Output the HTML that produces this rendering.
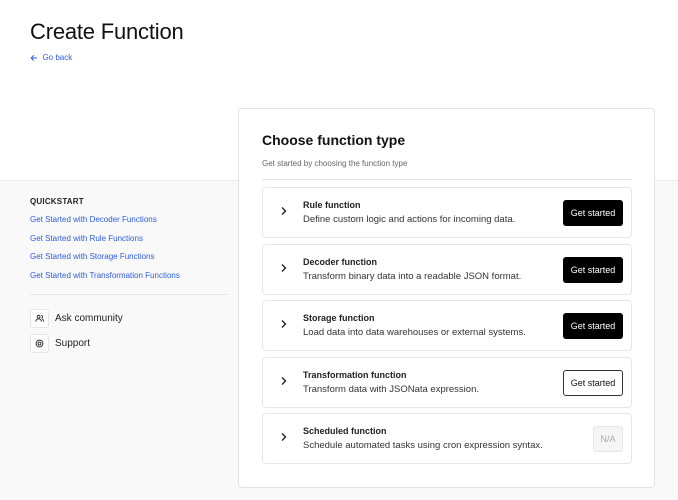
<!DOCTYPE html>
<html><head><meta charset="utf-8"><style>
*{box-sizing:border-box;margin:0;padding:0}
body{width:678px;height:500px;overflow:hidden;background:#fff;font-family:"Liberation Sans",Arial,sans-serif;color:#111;position:relative}
.grey{position:absolute;left:0;top:180px;width:678px;height:320px;background:#f9f9f9;border-top:1px solid #ececec}
h1{position:absolute;left:30px;top:19px;font-size:22px;font-weight:400;letter-spacing:-0.2px}
.back{position:absolute;left:30px;top:53px;font-size:8px;color:#2d5be3;display:flex;align-items:center}
.side{position:absolute;left:30px;top:197px;width:198px}
.qs{font-size:8px;font-weight:700;letter-spacing:.2px;color:#222}
.side a{display:block;font-size:8px;color:#2d5be3;text-decoration:none;height:18.6px;line-height:18.6px}
.hr{border-top:1px solid #e6e6e6;margin-top:8px}
.it{position:absolute;left:30px;display:flex;align-items:center;font-size:10px;color:#222}
.ib{width:19px;height:19px;background:#fff;border:1px solid #e6e6e6;border-radius:3px;margin-right:6px;display:flex;align-items:center;justify-content:center}
.panel{position:absolute;left:238px;top:108px;width:417px;height:380px;background:#fff;border:1px solid #e3e3e3;border-radius:4px}
.pt{position:absolute;left:23px;top:23px;font-size:14px;font-weight:700}
.ps{position:absolute;left:23px;top:50px;font-size:8px;color:#666}
.pd{position:absolute;left:23px;top:70px;width:370px;border-top:1px solid #e6e6e6}
.card{position:absolute;left:23px;width:370px;height:51px;border:1px solid #e6e6e6;border-radius:4px;background:#fff}
.chev{position:absolute;left:17px;top:18px}
.ct{position:absolute;left:40px;top:12px;font-size:9px;font-weight:700;color:#222}
.cd{position:absolute;left:40px;top:26px;font-size:9.5px;color:#333}
.btn{position:absolute;right:8px;top:12px;width:60px;height:26px;border-radius:3px;background:#000;color:#fff;font-size:9px;display:flex;align-items:center;justify-content:center}
.btn.o{background:#fff;color:#111;border:1.5px solid #333}
.btn.na{background:#f5f5f5;color:#aaa;border:1px solid #e6e6e6;width:30px;right:8px}
</style></head><body>
<div class="grey"></div>
<h1>Create Function</h1>
<div class="back"><svg width="8" height="8" viewBox="0 0 8 8" fill="none" stroke="#2d5be3" stroke-width="1"><path d="M7 4H1.2M3.8 1.3L1.2 4l2.6 2.7"/></svg>&nbsp;&nbsp;Go back</div>
<div class="side">
<div class="qs">QUICKSTART</div>
<div style="height:5px"></div>
<a>Get Started with Decoder Functions</a>
<a>Get Started with Rule Functions</a>
<a>Get Started with Storage Functions</a>
<a>Get Started with Transformation Functions</a>
<div class="hr" style="margin-top:9px"></div>
</div>
<div class="it" style="top:309px"><div class="ib"><svg width="9" height="9" viewBox="0 0 10 10" fill="none" stroke="#333" stroke-width="1"><circle cx="4" cy="3" r="1.6"/><path d="M1 8.5c0-2 1.3-3 3-3s3 1 3 3M7 1.6a1.5 1.5 0 010 3M8 5.8c1 .4 1.5 1.3 1.5 2.7"/></svg></div>Ask community</div>
<div class="it" style="top:334px"><div class="ib"><svg width="9" height="9" viewBox="0 0 10 10" fill="none" stroke="#333" stroke-width="1.1"><circle cx="5" cy="5" r="3.8"/><circle cx="5" cy="5" r="1.6"/></svg></div>Support</div>
<div class="panel">
<div class="pt">Choose function type</div>
<div class="ps">Get started by choosing the function type</div>
<div class="pd"></div>
<div class="card" style="top:78px"><svg class="chev" width="8" height="10" viewBox="0 0 8 10"><path d="M2 1.5L5.5 5 2 8.5" fill="none" stroke="#222" stroke-width="1.4"/></svg><div class="ct">Rule function</div><div class="cd">Define custom logic and actions for incoming data.</div><div class="btn">Get started</div></div>
<div class="card" style="top:135px"><svg class="chev" width="8" height="10" viewBox="0 0 8 10"><path d="M2 1.5L5.5 5 2 8.5" fill="none" stroke="#222" stroke-width="1.4"/></svg><div class="ct">Decoder function</div><div class="cd">Transform binary data into a readable JSON format.</div><div class="btn">Get started</div></div>
<div class="card" style="top:191px"><svg class="chev" width="8" height="10" viewBox="0 0 8 10"><path d="M2 1.5L5.5 5 2 8.5" fill="none" stroke="#222" stroke-width="1.4"/></svg><div class="ct">Storage function</div><div class="cd">Load data into data warehouses or external systems.</div><div class="btn">Get started</div></div>
<div class="card" style="top:248px"><svg class="chev" width="8" height="10" viewBox="0 0 8 10"><path d="M2 1.5L5.5 5 2 8.5" fill="none" stroke="#222" stroke-width="1.4"/></svg><div class="ct">Transformation function</div><div class="cd">Transform data with JSONata expression.</div><div class="btn o">Get started</div></div>
<div class="card" style="top:304px"><svg class="chev" width="8" height="10" viewBox="0 0 8 10"><path d="M2 1.5L5.5 5 2 8.5" fill="none" stroke="#222" stroke-width="1.4"/></svg><div class="ct">Scheduled function</div><div class="cd">Schedule automated tasks using cron expression syntax.</div><div class="btn na">N/A</div></div>
</div>
</body></html>
